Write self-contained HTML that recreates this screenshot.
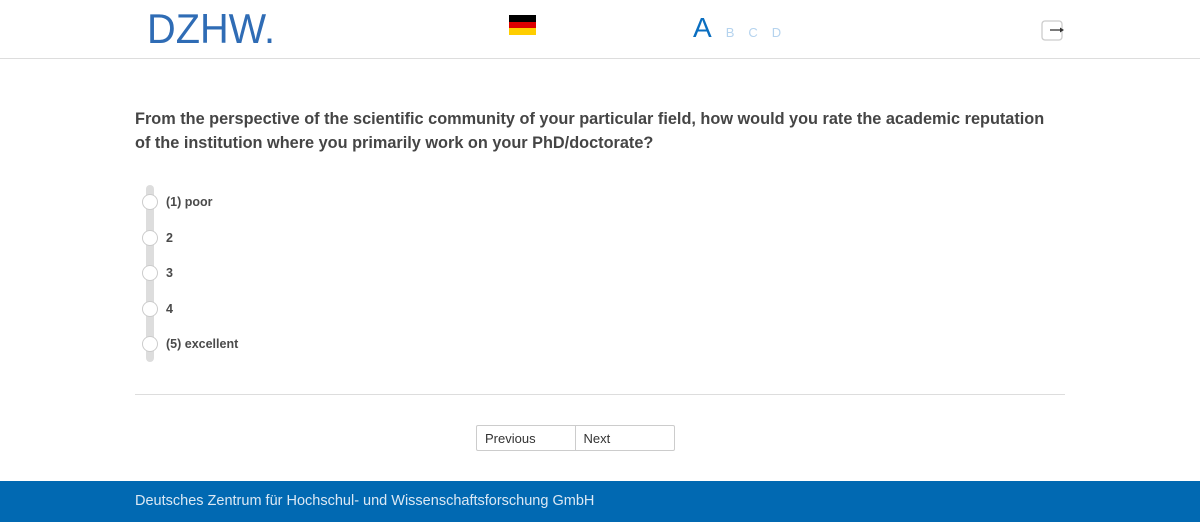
<!DOCTYPE html>
<html><head><meta charset="utf-8">
<style>
*{margin:0;padding:0;box-sizing:border-box}
html,body{width:1200px;height:531px;background:#fff;overflow:hidden;font-family:"Liberation Sans","DejaVu Sans",sans-serif}
.header{position:absolute;left:0;top:0;width:1200px;height:59px;border-bottom:1px solid #ddd}
.logo{position:absolute;left:145px;top:5px}
.flag{position:absolute;left:509px;top:15px;width:27px;height:20px}
.flag div{height:33.4%}
.letters{position:absolute;left:693px;top:12px;color:#0a6ec0}
.letters .a{font-size:28px}
.letters .o{font-size:13px;color:#b5d3ee;margin-left:14px}
.exit{position:absolute;left:1041px;top:20px}
.q{position:absolute;left:135px;top:107px;width:915px;font-size:16.3px;font-weight:bold;color:#454545;line-height:24px}
.bar{position:absolute;left:146px;top:185px;width:8px;height:177px;background:#ddd;border-radius:4px}
.opt{position:absolute;left:142px;width:16px;height:16px;border-radius:50%;background:#fff;border:1px solid #ccc}
.lab{position:absolute;left:166px;font-size:12.5px;font-weight:bold;color:#4a4a4a}
.hr{position:absolute;left:135px;top:394px;width:930px;border-top:1px solid #ddd}
.btns{position:absolute;left:476px;top:425px;width:199px;height:26px;border:1px solid #ccc;border-radius:2px;display:flex;font-size:13px;color:#333}
.btns div{width:99px;padding:5px 0 0 8px}
.btns div:first-child{border-right:1px solid #ccc}
.footer{position:absolute;left:0;top:481px;width:1200px;height:41px;background:#0169b2;color:#dbe8f4;font-size:14.5px;padding:12px 0 0 135px}
</style></head><body>
<div class="header">
<svg class="logo" width="135" height="45" viewBox="0 0 135 45"><text x="2" y="38" font-family="Liberation Sans, sans-serif" font-size="42" fill="#2f6cb5" textLength="128" lengthAdjust="spacingAndGlyphs">DZHW.</text></svg>
<div class="flag"><div style="background:#000"></div><div style="background:#dd0000"></div><div style="background:#ffce00"></div></div>
<div class="letters"><span class="a">A</span><span class="o">B</span><span class="o">C</span><span class="o">D</span></div>
<svg class="exit" width="24" height="22" viewBox="0 0 24 22"><rect x="1" y="1" width="20" height="19" rx="3" fill="none" stroke="#ccc" stroke-width="1.3"/><line x1="9" y1="10" x2="21" y2="10" stroke="#333" stroke-width="1.3"/><path d="M19 7.5 L23 10 L19 12.5Z" fill="#333"/></svg>
</div>
<div class="q">From the perspective of the scientific community of your particular field, how would you rate the academic reputation of the institution where you primarily work on your PhD/doctorate?</div>
<div class="bar"></div>
<div class="opt" style="top:194px"></div><div class="lab" style="top:195px">(1) poor</div>
<div class="opt" style="top:230px"></div><div class="lab" style="top:231px">2</div>
<div class="opt" style="top:265px"></div><div class="lab" style="top:266px">3</div>
<div class="opt" style="top:301px"></div><div class="lab" style="top:302px">4</div>
<div class="opt" style="top:336px"></div><div class="lab" style="top:337px">(5) excellent</div>
<div class="hr"></div>
<div class="btns"><div>Previous</div><div>Next</div></div>
<div class="footer">Deutsches Zentrum für Hochschul- und Wissenschaftsforschung GmbH</div>
</body></html>
